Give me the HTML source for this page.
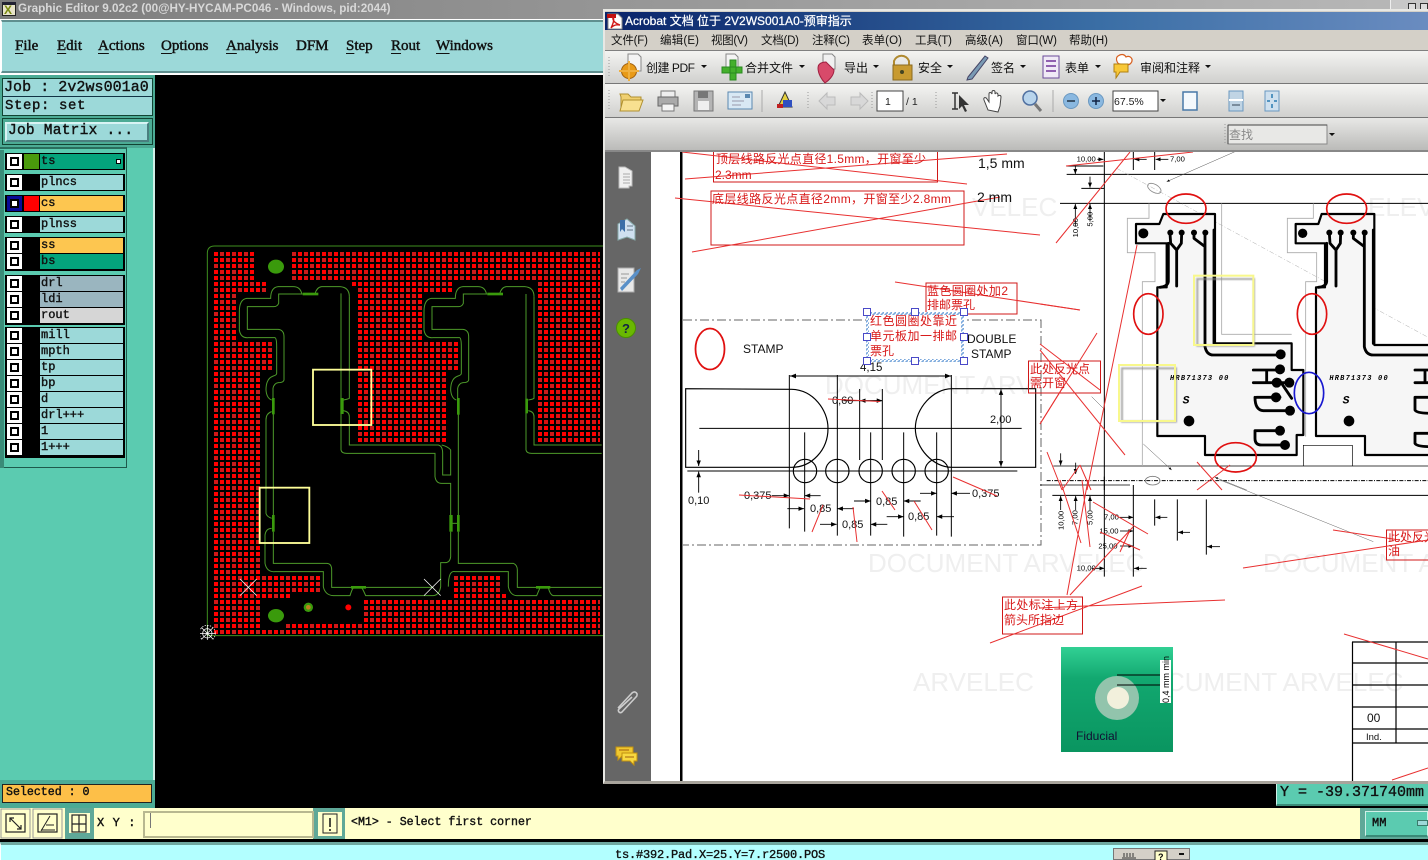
<!DOCTYPE html>
<html><head><meta charset="utf-8"><style>
html,body{margin:0;padding:0;background:#000;width:1428px;height:860px;overflow:hidden}
#p{position:absolute;left:0;top:0;width:1428px;height:860px;overflow:hidden;background:#000}
#p div{position:absolute;box-sizing:border-box;white-space:pre}
.m{font:15px "Liberation Serif",serif;-webkit-text-stroke:.45px #111;color:#111;top:38px}
.m u{text-underline-offset:3px}
.j{font:15px "Liberation Mono",monospace;-webkit-text-stroke:.4px #111;color:#111}
.r{left:5px;width:120px;height:17px;background:#000}
.c{left:2px;top:1px;width:15px;height:15px;border:3px solid #fff;background:#fff}
.c::after{content:"";position:absolute;left:0;top:0;width:9px;height:9px;box-sizing:border-box;border:2px solid #000;background:#fff}
.l{left:35px;top:1px;width:83px;height:15px;background:#9cd9d9;font:12px/14px "Liberation Mono",monospace;-webkit-text-stroke:.4px #111;color:#111;padding-left:1px}
.s{top:0;left:19px;width:15px;height:15px;top:1px}
</style></head><body><div id="p">

<!-- left application chrome -->
<div style="left:0;top:0;width:1428px;height:19px;background:linear-gradient(90deg,#7c7c7c,#b8b8b8)"></div>
<div style="left:2px;top:2px;width:14px;height:14px;background:#e8e4c8;border:1px solid #222;border-top:3px solid #223"></div>
<div style="left:4px;top:5px;font:bold 12px/11px 'Liberation Sans',sans-serif;color:#7a8a10">X</div>
<div style="left:18px;top:2px;font:bold 11.68px/14px 'Liberation Sans',sans-serif;color:#d8d8d8">Graphic Editor 9.02c2 (00@HY-HYCAM-PC046 - Windows, pid:2044)</div>
<div style="left:0;top:19px;width:1428px;height:56px;background:#fff"></div>
<div style="left:1px;top:20px;width:1427px;height:53px;background:#9cd9d9;border-top:2px solid #5f8f8f;border-left:1px solid #fff;border-bottom:2px solid #5f8f8f"></div>
<div class="m" style="left:15px"><u>F</u>ile</div>
<div class="m" style="left:57px"><u>E</u>dit</div>
<div class="m" style="left:98px"><u>A</u>ctions</div>
<div class="m" style="left:161px"><u>O</u>ptions</div>
<div class="m" style="left:226px"><u>A</u>nalysis</div>
<div class="m" style="left:296px">DFM</div>
<div class="m" style="left:346px"><u>S</u>tep</div>
<div class="m" style="left:391px"><u>R</u>out</div>
<div class="m" style="left:436px"><u>W</u>indows</div>

<div style="left:0;top:75px;width:155px;height:733px;background:#5bcbb0"></div>
<div style="left:153px;top:148px;width:2px;height:660px;background:#d0f0e8"></div>
<div style="left:0;top:75px;width:155px;height:73px;background:#4cab95"></div>
<div style="left:2px;top:78px;width:151px;height:38px;background:#9cd9d9;border:1px solid #143"></div>
<div style="left:3px;top:96px;width:149px;height:1px;background:#134"></div>
<div class="j" style="left:4px;top:79px;font-size:15px;line-height:17px;letter-spacing:.05px">Job : 2v2ws001a0</div>
<div class="j" style="left:5px;top:98px;font-size:14px;line-height:17px;letter-spacing:.6px">Step: set</div>
<div style="left:2px;top:118px;width:151px;height:27px;background:#4cab95;border:1px solid #143"></div>
<div style="left:5px;top:122px;width:144px;height:20px;background:#9cd9d9;border:2px solid;border-color:#d8f4f4 #4a7f7f #4a7f7f #d8f4f4"></div>
<div class="j" style="left:8px;top:123px;font-size:14.5px;line-height:17px;letter-spacing:.25px">Job Matrix ...</div>

<div style="left:0;top:147px;width:127px;height:321px;background:#5bcbb0;border:1px solid #1e5a4c;border-left:0;border-top:2px solid #2a6e5e"></div>
<div style="left:0;top:150px;width:4px;height:318px;background:#3a8b78"></div>

<div class="r" style="top:153px"><div class="c"></div><div class="s" style="background:#4a9a0c"></div><div class="l" style="background:#04a47c">ts</div><div style="left:111px;top:6px;width:5px;height:5px;background:#fff;border:1px solid #000"></div></div>
<div class="r" style="top:174px"><div class="c"></div><div class="l">plncs</div></div>
<div class="r" style="top:195px"><div class="c" style="border-color:#0a0a96"></div><div class="s" style="background:#f00"></div><div class="l" style="background:#fdc650">cs</div></div>
<div class="r" style="top:216px"><div class="c"></div><div class="l">plnss</div></div>
<div class="r" style="top:237px;height:34px"><div class="c"></div><div class="l" style="background:#fdc650">ss</div><div class="c" style="top:17px"></div><div class="l" style="top:17px;height:15px;background:#04a47c">bs</div></div>
<div class="r" style="top:275px;height:50px"><div class="c"></div><div class="l" style="background:#9ab5bf">drl</div><div class="c" style="top:17px"></div><div class="l" style="top:17px;background:#9ab5bf">ldi</div><div class="c" style="top:33px"></div><div class="l" style="top:33px;background:#d6d6d6">rout</div></div>
<div class="r" style="top:327px;height:131px">
<div class="c"></div><div class="l">mill</div>
<div class="c" style="top:17px"></div><div class="l" style="top:17px">mpth</div>
<div class="c" style="top:33px"></div><div class="l" style="top:33px">tp</div>
<div class="c" style="top:49px"></div><div class="l" style="top:49px">bp</div>
<div class="c" style="top:65px"></div><div class="l" style="top:65px">d</div>
<div class="c" style="top:81px"></div><div class="l" style="top:81px">drl+++</div>
<div class="c" style="top:97px"></div><div class="l" style="top:97px">1</div>
<div class="c" style="top:113px"></div><div class="l" style="top:113px">1+++</div>
</div>
<div style="left:0;top:468px;width:3px;height:312px;background:#5bcbb0"></div>

<div style="left:0;top:780px;width:155px;height:28px;background:#4cab95"></div>
<div style="left:2px;top:784px;width:150px;height:19px;background:#fdbf48;border:1px solid #222;font:11.6px/16px 'Liberation Mono',monospace;-webkit-text-stroke:.4px #111;color:#111;padding-left:3px">Selected : 0</div>

<!-- PCB canvas -->
<svg style="position:absolute;left:200px;top:240px" width="405" height="400" viewBox="0 0 1215 1200">
<defs>
<pattern id="d" patternUnits="userSpaceOnUse" x="42" y="36" width="72" height="72">
<g fill="#f00">
<rect x="0" y="0" width="12" height="12"/><rect x="18" y="0" width="12" height="12" fill="#d01818"/><rect x="36" y="0" width="12" height="12"/><rect x="54" y="0" width="12" height="12" fill="#d81010"/>
<rect x="0" y="18" width="12" height="12"/><rect x="18" y="18" width="12" height="12"/><rect x="36" y="18" width="12" height="12" fill="#d01818"/><rect x="54" y="18" width="12" height="12"/>
<rect x="0" y="36" width="12" height="12" fill="#d01818"/><rect x="18" y="36" width="12" height="12"/><rect x="36" y="36" width="12" height="12"/><rect x="54" y="36" width="12" height="12"/>
<rect x="0" y="54" width="12" height="12"/><rect x="18" y="54" width="12" height="12" fill="#e01010"/><rect x="36" y="54" width="12" height="12"/><rect x="54" y="54" width="12" height="12" fill="#c81c1c"/>
</g></pattern>
<g id="tp" fill="none" stroke="#4d9a2a" stroke-width="3">
<path d="M305,160Q300,140 280,140H235Q212,142 212,175H140Q118,178 118,215V270Q122,295 145,293H225Q230,295 230,320V400Q230,405 220,408Q198,415 198,450Q200,475 215,480"/>
<path d="M308,162H236V190Q232,200 222,200H142V268H235Q252,270 252,290V420Q250,428 235,428Q222,430 219,445V475"/>
<path d="M345,162Q350,142 365,140H420Q448,142 448,170"/>
</g>
</defs>
<rect x="39" y="33" width="1161" height="1149" fill="url(#d)"/>
<polygon fill="#000" points="165,27 273,27 273,123 453,123 453,141 471,141 471,609 741,609 741,393 777,393 777,303 669,303 669,159 759,159 759,123 1011,123 1011,609 1215,609 1215,1077 489,1077 489,1149 255,1149 255,1167 183,1167 183,1077 273,1077 273,1059 363,1059 363,1005 183,1005 183,393 219,393 219,303 111,303 111,159 201,159 201,123 165,123"/>
<rect x="759" y="1005" width="144" height="72" fill="url(#d)"/>
<rect x="903" y="1059" width="18" height="18" fill="url(#d)"/>
<path d="M1215,18H44Q22,18 22,40V1187H1215" fill="none" stroke="#3f8f1f" stroke-width="3"/>
<use href="#tp"/>
<use href="#tp" x="554"/>
<g fill="none" stroke="#4d9a2a" stroke-width="3">
<path d="M215,515Q198,520 198,540V820Q200,830 215,835M215,865Q198,865 195,885V970Q200,997 225,995H370V1040Q375,1065 400,1067H450Q455,1050 460,1043"/>
<path d="M220,520V825M220,875V970H380Q395,970 395,990V1042H455"/>
<path d="M448,170V475Q442,478 430,480M430,512Q448,515 448,530V615H715Q728,618 728,640V705H752V630Q745,620 725,615"/>
<path d="M423,160V630Q425,640 440,640H705V710Q708,730 725,730H752V825M752,875V950Q750,968 735,968H722V1040Q718,1065 700,1067H497Q490,1050 485,1043"/>
<path d="M497,1042H700M745,1040Q745,990 765,995H925V1040Q930,1065 950,1067H1010Q1015,1055 1020,1043M775,520V825M775,875V970H940Q952,975 952,990V1042H1010M1045,1043Q1050,1065 1060,1067H1205M1050,1042H1205"/>
<path d="M1002,170V475Q998,478 985,480M985,512Q1002,515 1002,530V615H1205M978,162V630Q980,640 995,640H1205"/>
<path d="M752,850H775"/>
</g>
<g fill="#3a9a0c">
<rect x="308" y="158" width="47" height="8"/><rect x="862" y="158" width="47" height="8"/>
<rect x="216" y="474" width="8" height="49"/><rect x="421" y="474" width="10" height="48"/>
<rect x="771" y="474" width="8" height="50"/><rect x="976" y="476" width="8" height="44"/>
<rect x="216" y="825" width="8" height="50"/><rect x="748" y="825" width="10" height="50"/><rect x="771" y="825" width="8" height="50"/>
<rect x="453" y="1038" width="45" height="8"/><rect x="1008" y="1038" width="43" height="8"/>
<ellipse cx="228" cy="80" rx="24" ry="21"/><ellipse cx="228" cy="1127" rx="24" ry="20"/><circle cx="325" cy="1102" r="14"/>
</g>
<circle cx="325" cy="1102" r="7" fill="#c08020"/>
<circle cx="445" cy="1102" r="9" fill="#f00"/>
<g fill="none" stroke="#ffff99" stroke-width="5.5"><rect x="339" y="389" width="175" height="166"/><rect x="179" y="743" width="149" height="166"/></g>
<g stroke="#fff" stroke-width="2.2" fill="none">
<path d="M120,1017L170,1067M170,1017L120,1067M672,1017L722,1067M722,1017L672,1067"/>
<circle cx="22" cy="1180" r="14"/><circle cx="22" cy="1180" r="24" stroke-dasharray="4 4"/>
<path d="M-3,1180H47M22,1155V1200M4,1162L40,1198M40,1162L4,1198"/>
</g>
</svg>

<!-- bottom -->
<div style="left:0;top:808px;width:1428px;height:31px;background:#ffffcc"></div>
<div style="left:0;top:839px;width:1428px;height:3px;background:#000"></div>
<div style="left:0;top:842px;width:1428px;height:18px;background:#b2ffff;border-top:3px solid #6fa8a0;border-left:1px solid #fff"></div>
<div style="left:615px;top:848px;font:12px/14px 'Liberation Mono',monospace;-webkit-text-stroke:.35px #111;color:#111;letter-spacing:-.2px">ts.#392.Pad.X=25.Y=7.r2500.POS</div>
<div style="left:1113px;top:848px;width:77px;height:12px;background:#d4d0c8;border:1px solid #777"></div>
<svg style="position:absolute;left:1118px;top:850px" width="70" height="10"><path d="M4,8h14M6,3v4M9,3v4M12,3v4M15,3v4" stroke="#333" fill="none"/><rect x="37" y="1" width="12" height="10" fill="#ffffcc" stroke="#222"/><text x="40" y="10" font-size="9" font-weight="bold" font-family="Liberation Sans">?</text><rect x="61" y="3" width="5" height="2" fill="#111"/></svg>

<svg style="position:absolute;left:0;top:808px" width="350" height="31">
<g fill="#ffffcc" stroke="#999"><rect x="1" y="1" width="29" height="29"/><rect x="33" y="1" width="29" height="29"/></g>
<rect x="65" y="0" width="29" height="31" fill="#5fa898"/><rect x="69" y="5" width="21" height="20" fill="#ffffcc"/>
<g fill="#ffffcc" stroke="#222" stroke-width="1.2"><rect x="6" y="6" width="19" height="18"/><rect x="38" y="6" width="19" height="18"/><rect x="72" y="7" width="14" height="17"/></g>
<path d="M10,10L21,21M21,17V21H17M10,14V10H14" stroke="#222" fill="none" stroke-width="1.2"/>
<path d="M41,23L50,8M41,22H55M46,17H54" stroke="#222" fill="none"/>
<path d="M79,7V24M72,16H86" stroke="#222" stroke-width="1.2"/>
<rect x="313" y="0" width="32" height="31" fill="#5fa898"/><rect x="318" y="4" width="24" height="24" fill="#ffffcc"/>
<rect x="323" y="6" width="14" height="19" fill="#ffffcc" stroke="#222"/><path d="M330,10V19M330,21V23" stroke="#111" stroke-width="1.5"/>
</svg>
<div style="left:97px;top:815px;font:12px/16px 'Liberation Mono',monospace;-webkit-text-stroke:.4px #111;color:#111;letter-spacing:.6px">X Y :</div>
<div style="left:143px;top:811px;width:171px;height:27px;background:#ffffcc;border:2px solid #b8b890"></div>
<div style="left:150px;top:813px;width:1px;height:15px;background:#777"></div>
<div style="left:351px;top:815px;font:11.6px/16px 'Liberation Mono',monospace;-webkit-text-stroke:.4px #111;color:#111">&lt;M1&gt; - Select first corner</div>
<div style="left:1360px;top:808px;width:68px;height:31px;background:#5fa898"></div>
<div style="left:1365px;top:811px;width:63px;height:26px;background:#5bcbb0;border:1px solid #d0f0e8;border-bottom:2px solid #3a8b78"></div>
<div style="left:1372px;top:815px;font:12px/16px 'Liberation Mono',monospace;-webkit-text-stroke:.4px #111;color:#111">MM</div>
<div style="left:1417px;top:820px;width:11px;height:6px;background:#9cd9d9;border:1px solid #3a7a6a"></div>
<div style="left:1276px;top:784px;width:152px;height:22px;background:#5bcbb0;border-left:1px solid #d0f0e8;border-bottom:2px solid #3a8b78;font:15px/15px 'Liberation Mono',monospace;-webkit-text-stroke:.35px #111;color:#111;padding:1px 0 0 3px">Y = -39.371740mm</div>

<!-- top right behind acrobat -->
<div style="left:1390px;top:0;width:38px;height:10px;background:#c8c8c8;border-left:1px solid #eee"></div>
<div style="left:1408px;top:3px;width:8px;height:7px;background:#ddd;border:1px solid #333"></div>
<div style="left:1420px;top:3px;width:8px;height:7px;background:#ddd;border:1px solid #333"></div>

<!-- Acrobat window -->
<div style="left:603px;top:9px;width:825px;height:775px;background:#d4d0c8;border:2px solid #e8e8e4;border-right:0;border-bottom:3px solid #a8a49c"></div>
<div style="left:605px;top:12px;width:823px;height:18px;background:linear-gradient(90deg,#0a246a,#3a6ea5 60%,#6a8cc0);"></div>
<div style="left:625px;top:13px;font:12px/16px 'Liberation Sans','Noto Sans CJK SC',sans-serif;color:#fff;-webkit-text-stroke:.25px #fff">Acrobat 文档 位于 2V2WS001A0-预审指示</div>
<svg style="position:absolute;left:607px;top:13px" width="16" height="17"><path d="M1,1H11L15,5V16H1Z" fill="#fff" stroke="#888"/><path d="M0,1H9V5H0Z" fill="#c01010"/><path d="M4,15Q8,7 6,4Q5,9 13,12Q7,11 4,15" fill="none" stroke="#d01818" stroke-width="1.4"/></svg>
<div style="left:605px;top:30px;width:823px;height:21px;background:#d4d0c8"></div>
<div style="left:605px;top:50px;width:823px;height:1px;background:#808080"></div>
<div style="left:605px;top:51px;width:823px;height:33px;background:linear-gradient(#f4f4f2,#cfcfcd)"></div>
<div style="left:605px;top:83px;width:823px;height:1px;background:#777"></div>
<div style="left:605px;top:84px;width:823px;height:34px;background:linear-gradient(#f4f4f2,#cfcfcd)"></div>
<div style="left:605px;top:117px;width:823px;height:1px;background:#777"></div>
<div style="left:605px;top:118px;width:823px;height:34px;background:linear-gradient(#e8e8e6,#b8b8b6)"></div>

<svg style="position:absolute;left:0;top:0" width="1428" height="152" font-family="Liberation Sans,Noto Sans CJK SC,sans-serif">
<g font-size="11.5" fill="#111">
<text x="611" y="44" textLength="37">文件(F)</text><text x="660" y="44" textLength="39">编辑(E)</text><text x="711" y="44" textLength="37">视图(V)</text><text x="761" y="44" textLength="38">文档(D)</text><text x="812" y="44" textLength="38">注释(C)</text><text x="862" y="44" textLength="40">表单(O)</text><text x="915" y="44" textLength="37">工具(T)</text><text x="965" y="44" textLength="38">高级(A)</text><text x="1016" y="44" textLength="41">窗口(W)</text><text x="1069" y="44" textLength="39">帮助(H)</text>
</g>
<g font-size="12" fill="#111">
<text x="646" y="72" textLength="49">创建 PDF</text><text x="745" y="72" textLength="48">合并文件</text><text x="844" y="72" textLength="24">导出</text><text x="918" y="72" textLength="24">安全</text><text x="991" y="72" textLength="24">签名</text><text x="1065" y="72" textLength="24">表单</text><text x="1140" y="72" textLength="60">审阅和注释</text>
</g>
<g fill="#111"><path d="M701,65h6l-3,3zM799,65h6l-3,3zM873,65h6l-3,3zM947,65h6l-3,3zM1020,65h6l-3,3zM1095,65h6l-3,3zM1205,65h6l-3,3zM1160,99h6l-3,3zM1329,133h6l-3,3z"/></g>
<!-- grips -->
<g stroke="#999" stroke-dasharray="1 2"><path d="M609,57V77M609,90V110M1225,124V144M808,92V110M872,92V110M936,92V110"/></g>
<path d="M762,90V112M1053,90V112" stroke="#aaa"/>
<!-- toolbar1 icons -->
<path d="M628,54h10l3,3v14h-13z" fill="#f4f4f4" stroke="#888"/><circle cx="629" cy="71" r="7.5" fill="#e89a18" stroke="#a06010"/><path d="M629,61v20M619,71h20" stroke="#f0b040" stroke-width="2"/>
<path d="M726,54h9l3,3v14h-12z" fill="#f4f4f4" stroke="#888"/><path d="M730,60h6v20h-6zM722,67h20v6h-20z" fill="#44b02c" stroke="#2a8a20"/>
<path d="M823,54h9l3,3v12h-12z" fill="#f0f0f0" stroke="#888"/><path d="M818,68c0,-5 5,-6 8,-6l8,8c0,6 -6,11 -9,13c-3,-3 -7,-9 -7,-15z" fill="#d84a6a" stroke="#a02040"/>
<path d="M894,65v-4a8,8 0 0 1 15,0v4" fill="none" stroke="#b08a30" stroke-width="2"/><rect x="893" y="65" width="19" height="15" fill="#c89a30" stroke="#8a6a20"/><circle cx="902" cy="72" r="2" fill="#442"/>
<path d="M968,77L985,56L988,58L972,79L967,80Z" fill="#7a9ab4" stroke="#446"/>
<rect x="1043" y="56" width="16" height="22" fill="#f0eaf6" stroke="#6a4a9a"/><path d="M1046,61h10M1046,66h10M1046,71h10" stroke="#9060b0" stroke-width="2"/>
<path d="M1118,56c4,-3 7,-1 8,1c4,-2 8,2 5,6c-2,3 -8,2 -11,1c-3,0 -5,-6 -2,-8z" fill="#fff" stroke="#d86020" stroke-width="1.2"/><path d="M1114,64h14v8h-8l-4,6v-6h-2z" fill="#f8c838" stroke="#b08010"/>
<!-- toolbar2 icons -->
<path d="M620,94h8l3,3h10l0,3l-4,11h-16v-14z" fill="#f0d070" stroke="#b09030"/><path d="M620,111l3,-11h20l-4,11z" fill="#f8e090" stroke="#b09030"/>
<rect x="661" y="91" width="14" height="6" fill="#eee" stroke="#777"/><rect x="658" y="97" width="20" height="9" fill="#aaa" stroke="#666"/><rect x="662" y="104" width="12" height="7" fill="#f4f4f4" stroke="#777"/>
<rect x="694" y="91" width="19" height="20" fill="#b4b4b4" stroke="#777"/><rect x="698" y="91" width="10" height="7" fill="#777"/><rect x="698" y="101" width="11" height="9" fill="#eee"/>
<rect x="728" y="92" width="24" height="17" fill="#d8e8f4" stroke="#5a88b0"/><path d="M732,97h8M732,101h12M732,105h9" stroke="#99a"/><rect x="745" y="94" width="5" height="4" fill="#5a88b0"/>
<path d="M778,107L785,92L792,107Z" fill="#e4d040" stroke="#333"/><rect x="783" y="100" width="9" height="7" fill="#3050c0"/><rect x="777" y="104" width="6" height="4" fill="#c02020"/>
<path d="M819,101l8,-8v4h8v8h-8v4z" fill="#d8d8d8" stroke="#bbb"/><path d="M868,101l-8,-8v4h-9v8h9v4z" fill="#d8d8d8" stroke="#bbb"/>
<rect x="877" y="91" width="26" height="20" fill="#fff" stroke="#444"/><text x="885" y="105" font-size="10.5" fill="#222">1</text><text x="906" y="105" font-size="10.5" fill="#222">/ 1</text>
<path d="M952,93h6M952,109h6M955,93v16" stroke="#333" stroke-width="1.5"/><path d="M959,95v14l3,-3l3,6l2,-1l-3,-6h5z" fill="#333"/>
<path d="M988,110l-4,-10c-1,-3 2,-3 3,-1l2,3v-8c0,-2 2,-2 3,0v-2c0,-2 3,-2 3,0v2c1,-2 3,-1 3,1l0,1c1,-1 3,-1 3,1l-1,9l-2,6z" fill="#fff" stroke="#444"/>
<circle cx="1030" cy="98" r="7" fill="#b8d4ec" stroke="#5070a0" stroke-width="1.5"/><path d="M1035,104l6,7" stroke="#777" stroke-width="3"/>
<circle cx="1071" cy="101" r="7.5" fill="#8ab8e0" stroke="#6a98c0"/><path d="M1067,101h8" stroke="#234" stroke-width="1.5"/>
<circle cx="1096" cy="101" r="7.5" fill="#8ab8e0" stroke="#6a98c0"/><path d="M1092,101h8M1096,97v8" stroke="#124" stroke-width="1.5"/>
<rect x="1113" y="91" width="45" height="20" fill="#fff" stroke="#444"/><text x="1114" y="105" font-size="10.5" fill="#222">67.5%</text>
<rect x="1183" y="92" width="14" height="18" fill="#f4f8fc" stroke="#4878a8" stroke-width="1.5"/>
<rect x="1229" y="91" width="14" height="20" fill="#c0d4e4" stroke="#6a98c0"/><path d="M1229,100h14" stroke="#fff" stroke-width="2"/><path d="M1232,105h8" stroke="#345"/>
<rect x="1265" y="91" width="14" height="20" fill="#cfe0ee" stroke="#6a98c0"/><path d="M1272,94v4M1272,104v4M1267,101h3M1274,101h3" stroke="#2a7ab0" stroke-width="1.5"/>
<rect x="1228" y="125" width="99" height="19" fill="#e8e8e6" stroke="#888"/><path d="M1228,125h99M1228,125v19" stroke="#444"/><text x="1229" y="139" font-size="12" fill="#888">查找</text>
</svg>

<!-- Sidebar + page -->
<div style="left:605px;top:152px;width:46px;height:629px;background:#666"></div>
<div style="left:651px;top:152px;width:777px;height:629px;background:#fff"></div>
<div style="left:605px;top:150px;width:823px;height:2px;background:#888"></div>

<svg style="position:absolute;left:605px;top:152px" width="46" height="629">
<path d="M14,20V36H24V34H27V19L20,15H14Z" fill="#f0f0f0" stroke="#bbb"/><path d="M18,22h7M18,25h7M18,28h7M18,31h7" stroke="#aaa"/>
<path d="M13,72V88L22,85L30,88V74L22,67Z" fill="#cfe0f0" stroke="#8aa"/><path d="M15,68h5v12l-3,-3l-2,3z" fill="#3a6ea8"/><path d="M22,74h6M22,78h6" stroke="#678"/>
<path d="M13,116H29V140H13Z" fill="#e8e8e8" stroke="#aaa"/><path d="M15,136L32,118L36,116L33,122L17,139Z" fill="#5a90c8"/><path d="M16,122h8M16,126h6M16,130h4" stroke="#999"/>
<circle cx="21" cy="176" r="9.5" fill="#6ab800" stroke="#4a9000"/><text x="17" y="181" font-size="13" font-weight="bold" fill="#124" font-family="Liberation Sans">?</text>
<path d="M13,556L27,541c3,-3 7,1 4,4L17,560c-2,2 -5,-1 -3,-3L27,545" fill="none" stroke="#ccc" stroke-width="1.6"/>
<path d="M11,595h17v9h-11l-4,4v-4h-2z" fill="#f0c830" stroke="#c09010"/><path d="M17,601h15v8h-3v4l-4,-4h-8z" fill="#f8d840" stroke="#c09010"/><path d="M14,598h10M20,605h9" stroke="#a06010"/>
</svg>

<svg style="position:absolute;left:0;top:0" width="1428" height="860" font-family="Liberation Sans,Noto Sans CJK SC,sans-serif">
<defs>
<clipPath id="pg"><rect x="651" y="152" width="777" height="629"/></clipPath>
<marker id="a" markerWidth="6" markerHeight="6" refX="6" refY="3" orient="auto"><path d="M0,0.6L6,3L0,5.4Z" fill="#000"/></marker>
<pattern id="h" patternUnits="userSpaceOnUse" width="4" height="4"><rect width="4" height="4" fill="#fff"/><path d="M0,4L4,0" stroke="#7aa8dc" stroke-width="1.6"/></pattern>
<filter id="bl"><feGaussianBlur stdDeviation="2"/></filter>
<linearGradient id="fg" x1="0" y1="0" x2="0" y2="1"><stop offset="0" stop-color="#32d094"/><stop offset=".3" stop-color="#12a870"/><stop offset="1" stop-color="#0a9560"/></linearGradient>
</defs>
<g clip-path="url(#pg)">
<rect x="680" y="152" width="2.5" height="629" fill="#000"/>
<!-- watermarks -->
<g fill="#efefef" font-size="26">
<text x="868" y="572">DOCUMENT ARVELEC</text><text x="1263" y="572">DOCUMENT ARVELEC</text>
<text x="913" y="691">ARVELEC</text><text x="1166" y="691">CUMENT ARVELEC</text>
<text x="972" y="216">VELEC</text><text x="1368" y="216">ELEV</text><text x="825" y="394">DOCUMENT ARV</text>
</g>

<!-- stamp section -->
<path d="M683,320H1041V545H683" fill="none" stroke="#666" stroke-width="1" stroke-dasharray="9 3 2 3"/>
<ellipse cx="710" cy="349" rx="14.5" ry="20.5" fill="none" stroke="#e01010" stroke-width="1.8"/>
<text x="743" y="353" font-size="12" fill="#111">STAMP</text>
<text x="967" y="343" font-size="12" fill="#111">DOUBLE</text><text x="971" y="358" font-size="12" fill="#111">STAMP</text>
<text x="860" y="371" font-size="11.5" fill="#111">4,15</text>

<g transform="translate(680,380) scale(.33333)" fill="none" stroke="#000" stroke-width="3.5">
<path d="M17,262V26L335,28C400,30 444,90 444,145C444,210 395,262 335,262H17Z"/>
<path d="M1067,26V262H815C760,262 706,205 706,145C706,85 760,26 815,26H1067Z"/>
<path d="M58,145H1025M22,273H1012" stroke-width="3"/>
<g stroke-width="3"><path d="M328,-15V445M374,157V455M472,-15V467M539,27V240M572,157V467M607,27V240M671,157V470M770,157V467M814,-15V470"/></g>
<circle cx="375" cy="273" r="35"/><circle cx="472" cy="273" r="35"/><circle cx="572" cy="273" r="35"/><circle cx="671" cy="273" r="35"/><circle cx="770" cy="273" r="35"/>
<g stroke-width="2.8" marker-end="url(#a)">
<path d="M963,145V28"/><path d="M963,145V260"/>
<path d="M56,210V258"/><path d="M56,338V275"/>
<path d="M275,347H328"/><path d="M422,347H374"/><path d="M322,386H372"/><path d="M522,386H472"/><path d="M420,433H470"/><path d="M622,433H572"/><path d="M522,363H572"/><path d="M722,363H671"/><path d="M620,410H671"/><path d="M822,410H770"/><path d="M720,340H770"/><path d="M870,340H814"/>
<path d="M490,62H607"/>
<path d="M607,62H540"/>
</g>
</g>
<path d="M790,376H951" stroke="#000" marker-end="url(#a)"/><path d="M951,376H790" stroke="#000" marker-end="url(#a)"/>
<g font-size="11" fill="#111">
<text x="832" y="404">0,60</text><text x="990" y="423">2,00</text><text x="688" y="504">0,10</text><text x="744" y="499">0,375</text><text x="810" y="512">0,85</text><text x="842" y="528">0,85</text><text x="876" y="505">0,85</text><text x="908" y="520">0,85</text><text x="972" y="497">0,375</text>
</g>

<!-- PCB drawing -->
<g transform="translate(1040,150) scale(.33333)">
<g stroke="#000" stroke-width="3" fill="none">
<path d="M80,73H1170M60,160H1170M193,-10V1020"/>
<path d="M40,948H1170" stroke-width="2.5"/>
<path d="M280,5V60M344,5V60M80,48H190M124,115H193"/>
<path d="M790,948V886H937V948" stroke-width="2"/>
<path d="M0,1005H270" stroke-width="2"/>
</g>
<path d="M230,55L1170,565" stroke="#aaa" stroke-width="1.5" stroke-dasharray="14 6 3 6" fill="none"/>
<path d="M20,992H1170" stroke="#000" stroke-width="3" stroke-dasharray="12 4 3 4" fill="none"/>
<g fill="none" stroke="#aaa" stroke-width="2.5">
<path d="M327,160V205H262V308H345V395H307V948"/><path d="M545,160V553H755"/>
<path d="M820,160V205H742V308H830V395H797V860"/>
<ellipse cx="343" cy="115" rx="22" ry="12" transform="rotate(30 343 115)" stroke="#888"/>
<ellipse cx="338" cy="992" rx="22" ry="13" stroke="#777"/>
</g>
<g fill="#f6f6f6" stroke="#000" stroke-width="6.5" stroke-linejoin="round">
<path d="M370,192H525V580H755V660H790V855H770V915H495V858H352V412H380V280H288V222H358Z"/>
<path d="M845,192H1003V585H1175V915H975V858H828V412H855V280H767V222H835Z"/>
</g>
<g fill="none" stroke="#000" stroke-width="8.5" stroke-linecap="round" stroke-linejoin="round">
<path d="M390,250L392,280L410,300V408M425,250L424,280L410,300"/>
<path d="M462,250V265L495,290V590Q500,615 520,615H720M495,250V290"/>
<path d="M522,240V580"/>
<path d="M868,250L870,280L888,300V408M902,250L901,280L888,300"/>
<path d="M940,250V265L973,290V590Q978,615 1000,615H1175M973,250V290M1000,240V580"/>
<path d="M385,280V395Q382,410 360,412M860,280V395Q858,410 835,412"/>
<path d="M640,660H722M680,660V698M640,698H745M645,742Q645,780 670,782H750M650,742H720M718,690L755,745"/>
<path d="M645,842V865Q645,885 665,885H735M645,842H720"/>
<path d="M1125,660H1175M1155,660V698M1125,698H1175M1125,742V780Q1130,790 1175,790M1125,742H1175M1125,850V880Q1130,890 1175,890M1125,850H1175"/>
</g>
<g fill="#000">
<circle cx="310" cy="250" r="15"/><circle cx="447" cy="813" r="16"/><circle cx="722" cy="613" r="15"/><circle cx="720" cy="658" r="15"/><circle cx="748" cy="698" r="15"/><circle cx="710" cy="698" r="15"/><circle cx="708" cy="742" r="15"/><circle cx="750" cy="782" r="15"/><circle cx="720" cy="842" r="15"/><circle cx="735" cy="885" r="15"/>
<circle cx="391" cy="248" r="9"/><circle cx="425" cy="248" r="9"/><circle cx="462" cy="248" r="9"/><circle cx="496" cy="248" r="9"/>
<circle cx="788" cy="250" r="14"/><circle cx="927" cy="813" r="16"/>
<circle cx="868" cy="248" r="9"/><circle cx="902" cy="248" r="9"/><circle cx="940" cy="248" r="9"/><circle cx="974" cy="248" r="9"/>
</g>
<g font-family="Liberation Mono,monospace" font-weight="bold" font-size="21" fill="#000" font-style="italic">
<text x="390" y="690" textLength="175">HRB71373 00</text><text x="868" y="690" textLength="175">HRB71373 00</text>
<text x="428" y="760" font-size="34">S</text><text x="908" y="760" font-size="34">S</text>
</g>
<g fill="none" stroke="#888" stroke-width="6" filter="url(#bl)" opacity=".7">
<rect x="472" y="387" width="170" height="200"/><rect x="246" y="655" width="162" height="160"/>
</g>
<g fill="none" stroke="#f8f88c" stroke-width="6">
<rect x="462" y="377" width="178" height="208"/><rect x="237" y="645" width="168" height="168"/>
</g>
<g fill="none" stroke="#e01010" stroke-width="5">
<ellipse cx="438" cy="176" rx="60" ry="44"/><ellipse cx="325" cy="492" rx="44" ry="61"/><ellipse cx="587" cy="922" rx="62" ry="44"/><ellipse cx="920" cy="176" rx="60" ry="44"/><ellipse cx="816" cy="492" rx="44" ry="61"/>
</g>
<ellipse cx="807" cy="729" rx="44" ry="62" fill="none" stroke="#1818d0" stroke-width="5"/>
<g fill="none" stroke="#555" stroke-width="1.5">
<path d="M585,5L380,95" marker-end="url(#a)"/><path d="M155,740L190,775M310,882L395,960" marker-end="url(#a)"/>
<path d="M620,1020L525,982" marker-end="url(#a)"/>
</g>
<g fill="#000" font-size="23">
<text x="110" y="35">10,00</text><text x="390" y="35">7,00</text>
<text transform="translate(114,262) rotate(-90)">10,00</text><text transform="translate(158,230) rotate(-90)">5,00</text>
</g>
<g stroke="#000" stroke-width="2.5" marker-end="url(#a)" fill="none">
<path d="M172,28H190"/><path d="M320,28H283"/><path d="M385,28H347"/><path d="M106,48V72"/><path d="M150,80V113"/><path d="M106,230V162"/><path d="M150,215V162"/>
<path d="M62,910V946"/><path d="M107,938V972"/>
</g>
</g>

<g transform="translate(1040,480) scale(.33333)">
<g stroke="#000" stroke-width="3" fill="none">
<path d="M37,46H1170M193,-10V290M280,15V290M344,58V137M412,58V182M499,58V224"/>
</g>
<g stroke="#000" stroke-width="2.5" marker-end="url(#a)" fill="none">
<path d="M62,90V48"/><path d="M107,90V48"/><path d="M150,90V48"/>
<path d="M240,112H280"/><path d="M240,153H280"/><path d="M240,198H280"/><path d="M155,265H193"/><path d="M320,265H282"/><path d="M382,112H346"/><path d="M450,157H414"/><path d="M540,200H501"/>
</g>
<g fill="#000" font-size="23">
<text x="192" y="118">7,00</text><text x="178" y="161">15,00</text><text x="175" y="205">25,00</text><text x="110" y="272">10,00</text>
<text transform="translate(70,150) rotate(-90)">10,00</text><text transform="translate(113,135) rotate(-90)">7,00</text><text transform="translate(157,135) rotate(-90)">5,00</text>
</g>
<path d="M540,0L1000,185" stroke="#666" stroke-width="1.5" fill="none"/>
</g>

<!-- table -->
<g stroke="#000" stroke-width="1.2" fill="none">
<path d="M1352.5,642V781M1396,642V743M1352,642H1428M1352,663H1428M1352,685H1428M1352,707H1428M1352,729H1428M1352,743H1428"/>
</g>
<text x="1367" y="722" font-size="12" fill="#111">00</text><text x="1366" y="740" font-size="9.5" fill="#111">Ind.</text>

<!-- fiducial -->
<rect x="1061" y="647" width="112" height="105" fill="url(#fg)"/>
<circle cx="1117" cy="698" r="22" fill="#92c4ac"/><circle cx="1118" cy="698" r="11" fill="#f2f0dc"/>
<path d="M1117,675H1160M1117,685H1160" stroke="#000" fill="none"/>
<text x="1076" y="740" font-size="12" fill="#113">Fiducial</text>
<rect x="1160" y="660" width="11" height="43" fill="#fff"/>
<text transform="translate(1169,703) rotate(-90)" font-size="9" fill="#000">0,4 mm min</text>

<!-- red annotations -->
<g fill="none" stroke="#d01818" stroke-width="1">
<rect x="713.5" y="148" width="224" height="34"/><rect x="711" y="191" width="253" height="54"/><rect x="926" y="283" width="91" height="31"/><rect x="1028.5" y="361" width="72" height="32"/><rect x="1002.5" y="597" width="80" height="37"/><rect x="1386.5" y="530" width="60" height="30"/>
</g>
<g fill="none" stroke="#e83030" stroke-width="1">
<path d="M682,152L967,184M685,179L1007,154M675,198L1040,235M692,252L1000,197M895,282L1080,310"/>
<path d="M1056,243L1130,152M1066,166L1193,152"/>
<path d="M1040,304L1080,310M1040,344L1100,390M1097,333L1040,424M1040,350L1125,455M1137,245L1087,490"/>
<path d="M828,399L880,401.5M739,495L810,499M953,477L997,496M823,505L812,532M853,507L857,542M882,491L895,510M914,501L932,530M1063,387L1040,424"/>
<path d="M1047,452L1062,490M1080,465L1062,490M1080,465L1091,490M1197,462L1222,490M1230,465L1197,490"/>
<path d="M1060,480L1081,543M1088,480L1067,595M1082,480L1090,547M1093,502L1148,534M1100,532L1140,550M1133,527L1070,595M1130,530L1120,552"/>
<path d="M1142,586L990,643M1040,608L1225,600M1333,530L1400,540M1428,540L1243,568"/>
<path d="M1344,634L1428,659M1392,780L1428,768"/>
</g>
<g fill="#d81818" font-size="12">
<text x="716" y="163" textLength="210">顶层线路反光点直径1.5mm，开窗至少</text><text x="715" y="179">2.3mm</text>
<text x="712" y="203" textLength="239">底层线路反光点直径2mm，开窗至少2.8mm</text>
<text x="927" y="295" textLength="81">蓝色圆圈处加2</text><text x="927" y="309" textLength="48">排邮票孔</text>
<text x="1030" y="373" textLength="60">此处反光点</text><text x="1030" y="387" textLength="36">需开窗</text>
<text x="1004" y="609" textLength="74">此处标注上方</text><text x="1004" y="624" textLength="60">箭头所指边</text>
<text x="1388" y="541">此处反光</text><text x="1388" y="555">油</text>
</g>
<!-- selected note -->
<rect x="866" y="312" width="98" height="50" fill="url(#h)"/><rect x="869" y="315" width="92" height="44" fill="#fff"/>
<g fill="#d81818" font-size="12">
<text x="870" y="325" textLength="87">红色圆圈处靠近</text><text x="870" y="340" textLength="87">单元板加一排邮</text><text x="870" y="355" textLength="24">票孔</text>
</g>
<g fill="#fff" stroke="#4a4ac8" stroke-width="1">
<rect x="863.5" y="308.5" width="7" height="7"/><rect x="911.5" y="308.5" width="7" height="7"/><rect x="960.5" y="308.5" width="7" height="7"/>
<rect x="863.5" y="333.5" width="7" height="7"/><rect x="960.5" y="333.5" width="7" height="7"/>
<rect x="863.5" y="357.5" width="7" height="7"/><rect x="911.5" y="357.5" width="7" height="7"/><rect x="960.5" y="357.5" width="7" height="7"/>
</g>
<text x="978" y="168" font-size="14" fill="#111">1,5 mm</text>
<text x="977" y="202" font-size="14" fill="#111">2 mm</text>
</g>
</svg>

</div></body></html>
